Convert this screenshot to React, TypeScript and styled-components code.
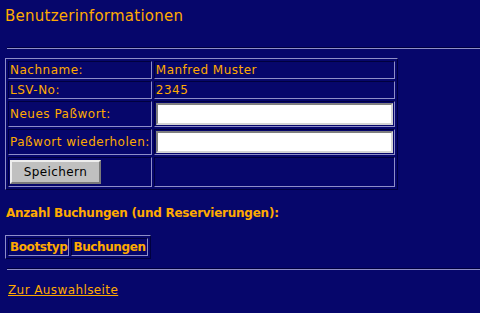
import React from "react";
import styled, { createGlobalStyle } from "styled-components";

const LIGHT = "#8e8ec8";
const DARK = "#00003e";

const GlobalStyle = createGlobalStyle`
  html, body {
    margin: 0;
    padding: 0;
    background: #06066b;
  }
  body {
    font-family: "DejaVu Sans", Verdana, sans-serif;
    font-size: 12px;
    color: #ffaa00;
  }
`;

const Page = styled.div`
  width: 480px;
  overflow: hidden;
  padding: 7px 0 20px 5px;
  box-sizing: border-box;
`;

const Title = styled.div`
  font-size: 15px;
  line-height: 18px;
  letter-spacing: 0.25px;
  margin: 0 0 22px 0;
`;

const Rule = styled.hr<{ $gap: number }>`
  height: 0;
  border: none;
  border-top: 1px solid ${DARK};
  border-bottom: 1px solid ${LIGHT};
  margin: 0 -10px ${(p) => p.$gap}px 2px;
`;

const Grid = styled.table`
  border-collapse: separate;
  border-spacing: 2px;
  border: 1px solid;
  border-color: ${LIGHT} ${DARK} ${DARK} ${LIGHT};
  font-size: 12px;
  color: #ffaa00;
`;

const Cell = styled.td<{ $bold?: boolean }>`
  border: 1px solid;
  border-color: ${DARK} ${LIGHT} ${LIGHT} ${DARK};
  padding: 1px;
  line-height: 14px;
  white-space: nowrap;
  font-weight: ${(p) => (p.$bold ? "bold" : "normal")};
  letter-spacing: ${(p) => (p.$bold ? "-0.4px" : "0.5px")};
  text-align: left;
`;

const TextInput = styled.input`
  display: block;
  width: 237px;
  height: 22px;
  box-sizing: border-box;
  margin: 0;
  background: #ffffff;
  border: 2px solid;
  border-color: #7f7f7f #d4d4d4 #d4d4d4 #7f7f7f;
  font-family: "DejaVu Sans", sans-serif;
  font-size: 12px;
  outline: none;
`;

const Button = styled.button`
  display: block;
  width: 91px;
  height: 24px;
  margin: 1px 0;
  background: #c0c0c0;
  border: 2px solid;
  border-color: #eeeeee #7a7a7a #7a7a7a #eeeeee;
  font-family: "DejaVu Sans", sans-serif;
  font-size: 12px;
  letter-spacing: 0.4px;
  color: #000;
  padding: 0;
`;

const Subtitle = styled.div`
  font-weight: bold;
  line-height: 14px;
  letter-spacing: -0.25px;
  margin: 16px 0 15px 1px;
`;

const SmallTableWrap = styled.div`
  margin-bottom: 9px;
`;

const Link = styled.a`
  display: inline-block;
  margin-left: 3px;
  line-height: 14px;
  letter-spacing: 0.4px;
  color: #ffaa00;
  text-decoration: underline;
`;

export default function App() {
  return (
    <>
      <GlobalStyle />
      <Page>
        <Title>Benutzerinformationen</Title>
        <Rule $gap={9} />
        <Grid>
          <tbody>
            <tr>
              <Cell>Nachname:</Cell>
              <Cell>Manfred Muster</Cell>
            </tr>
            <tr>
              <Cell>LSV-No:</Cell>
              <Cell>2345</Cell>
            </tr>
            <tr>
              <Cell>Neues Paßwort:</Cell>
              <Cell>
                <TextInput type="password" />
              </Cell>
            </tr>
            <tr>
              <Cell>Paßwort wiederholen:</Cell>
              <Cell>
                <TextInput type="password" />
              </Cell>
            </tr>
            <tr>
              <Cell>
                <Button>Speichern</Button>
              </Cell>
              <Cell />
            </tr>
          </tbody>
        </Grid>
        <Subtitle>Anzahl Buchungen (und Reservierungen):</Subtitle>
        <SmallTableWrap>
          <Grid>
            <tbody>
              <tr>
                <Cell as="th" $bold>
                  Bootstyp
                </Cell>
                <Cell as="th" $bold>
                  Buchungen
                </Cell>
              </tr>
            </tbody>
          </Grid>
        </SmallTableWrap>
        <Rule $gap={13} />
        <Link href="#">Zur Auswahlseite</Link>
      </Page>
    </>
  );
}
